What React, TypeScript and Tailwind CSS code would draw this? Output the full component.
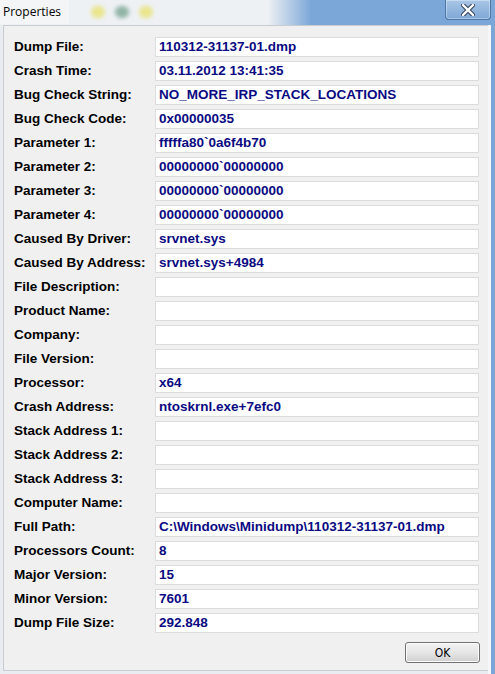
import React from 'react';

interface PropRow {
  label: string;
  value: string;
}

const rows: PropRow[] = [
  { label: 'Dump File:', value: '110312-31137-01.dmp' },
  { label: 'Crash Time:', value: '03.11.2012 13:41:35' },
  { label: 'Bug Check String:', value: 'NO_MORE_IRP_STACK_LOCATIONS' },
  { label: 'Bug Check Code:', value: '0x00000035' },
  { label: 'Parameter 1:', value: 'fffffa80`0a6f4b70' },
  { label: 'Parameter 2:', value: '00000000`00000000' },
  { label: 'Parameter 3:', value: '00000000`00000000' },
  { label: 'Parameter 4:', value: '00000000`00000000' },
  { label: 'Caused By Driver:', value: 'srvnet.sys' },
  { label: 'Caused By Address:', value: 'srvnet.sys+4984' },
  { label: 'File Description:', value: '' },
  { label: 'Product Name:', value: '' },
  { label: 'Company:', value: '' },
  { label: 'File Version:', value: '' },
  { label: 'Processor:', value: 'x64' },
  { label: 'Crash Address:', value: 'ntoskrnl.exe+7efc0' },
  { label: 'Stack Address 1:', value: '' },
  { label: 'Stack Address 2:', value: '' },
  { label: 'Stack Address 3:', value: '' },
  { label: 'Computer Name:', value: '' },
  { label: 'Full Path:', value: 'C:\\Windows\\Minidump\\110312-31137-01.dmp' },
  { label: 'Processors Count:', value: '8' },
  { label: 'Major Version:', value: '15' },
  { label: 'Minor Version:', value: '7601' },
  { label: 'Dump File Size:', value: '292.848' },
];

const App: React.FC = () => {
  return (
    <div className="w-[495px] h-[674px] flex flex-col bg-[#eef1f4] font-['Liberation_Sans',Arial,sans-serif] overflow-hidden">
      {/* title bar, aero glass */}
      <div className="h-[25px] flex items-start justify-between bg-linear-to-r from-[#eef1f4] from-54% via-[#bcd0e7] via-58% to-[#7aa6d8] to-63%">
        <div className="flex items-center h-[24px]">
          <span className="pl-[3px] pr-2 text-[12px] text-black bg-[#f4f5f6] leading-[24px] font-['Open_Sans','Liberation_Sans',sans-serif]">Properties</span>
          <div className="flex gap-[10px] ml-[22px] opacity-70 blur-[2px]">
            <span className="w-[14px] h-[12px] rounded-full bg-[#e8e060]" />
            <span className="w-[14px] h-[12px] rounded-full bg-[#6a9a86]" />
            <span className="w-[14px] h-[12px] rounded-full bg-[#e8e060]" />
          </div>
        </div>
        <div className="mr-[4px] w-[46px] h-[20px] rounded-b-[4px] border border-t-0 border-[#4c78a8] bg-linear-to-b from-[#a9c6e6] to-[#7ea8d6] flex items-center justify-center shadow-[inset_0_0_0_1px_rgba(255,255,255,0.35)]">
          <svg width="14" height="12" viewBox="0 0 14 12">
            <path d="M2 1 L12 11 M12 1 L2 11" stroke="#3b4a5e" strokeWidth="4.5" strokeLinecap="round" />
            <path d="M2 1 L12 11 M12 1 L2 11" stroke="#ffffff" strokeWidth="2.4" strokeLinecap="round" />
          </svg>
        </div>
      </div>

      {/* frame */}
      <div className="flex-1 flex">
        <div className="flex-1 flex flex-col pl-[3px] pb-[3px] bg-[#e9edf1]">
          <div className="flex-1 flex flex-col bg-[#f0f0f0] border-l border-t border-b border-[#c8cbcf] pt-[11px] pl-[10px] pr-[8px]">
            <div className="flex flex-col gap-[4px]">
              {rows.map((row) => (
                <div key={row.label} className="flex items-center h-[20px]">
                  <span className="w-[141px] text-[13.5px] font-bold text-black leading-none whitespace-nowrap">{row.label}</span>
                  <div className="w-[324px] h-[20px] bg-white border border-[#dcdcdc] flex items-center pl-[3px]">
                    <span className="text-[13.5px] font-bold text-[#0a0a82] leading-none whitespace-nowrap">{row.value}</span>
                  </div>
                </div>
              ))}
            </div>
            <div className="flex justify-end mt-[9px]">
              <button className="w-[75px] h-[21px] rounded-[3px] border border-[#707070] bg-linear-to-b from-[#f2f2f2] via-[#e6e6e6] to-[#cfcfcf] text-[12px] text-black font-['DejaVu_Sans_Condensed','Liberation_Sans',sans-serif] leading-none shadow-[inset_0_0_0_1px_#fcfcfc]">
                OK
              </button>
            </div>
          </div>
        </div>
        <div className="w-[3px] bg-[#f4f6f8]" />
        <div className="w-[4px] bg-[#7aa6d8]" />
      </div>
    </div>
  );
};

export default App;
